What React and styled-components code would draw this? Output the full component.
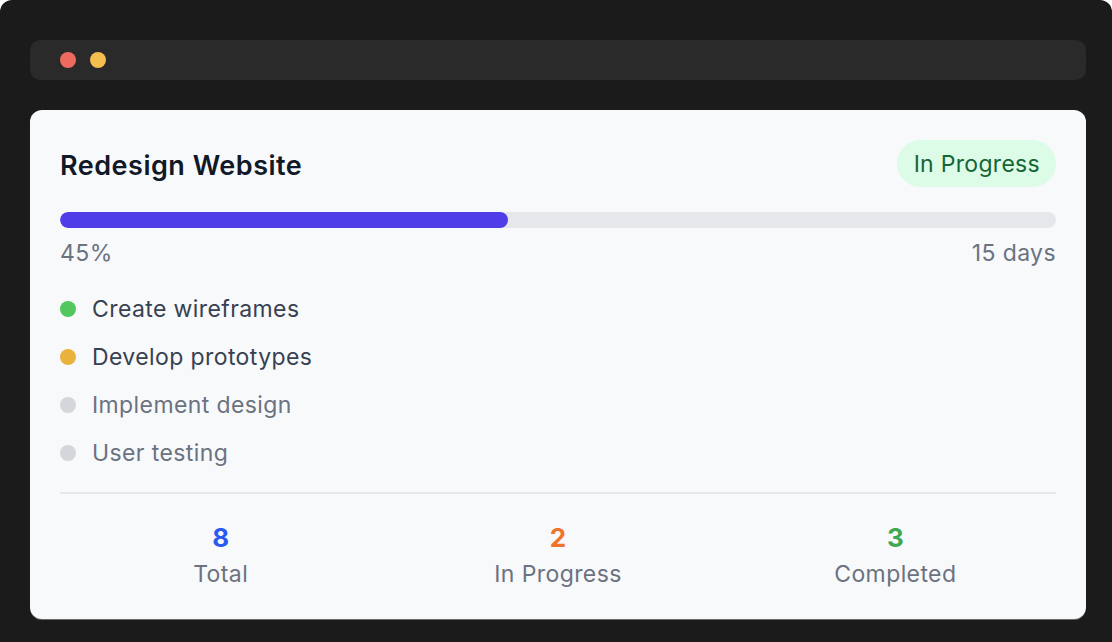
import React from "react";
import styled, { createGlobalStyle } from "styled-components";

const Global = createGlobalStyle`
  html, body { margin: 0; padding: 0; background: #ffffff; }
  body { font-family: Inter, "Noto Sans", "Liberation Sans", sans-serif; -webkit-font-smoothing: antialiased; }
`;

const Frame = styled.div`
  background: #1b1b1b;
  border-radius: 12px 12px 0 0;
  height: 100vh;
  overflow: hidden;
  padding: 40px 26px 0 30px;
  box-sizing: border-box;
`;

const TitleBar = styled.div`
  height: 40px;
  background: #2a2a2a;
  border-radius: 10px;
  display: flex;
  align-items: center;
  gap: 14px;
  padding-left: 30px;
`;

const WinDot = styled.span`
  width: 16px;
  height: 16px;
  border-radius: 50%;
  background: ${(p) => p.$color};
`;

const Card = styled.div`
  margin-top: 30px;
  background: #f8f9fb;
  border-radius: 12px;
  padding: 30px 30px 32px;
  box-shadow: 0 1px 0 rgba(255,255,255,0.35);
`;

const Header = styled.div`
  display: flex;
  align-items: center;
  justify-content: space-between;
`;

const Title = styled.h2`
  margin: 4px 0 0;
  font-size: 27px;
  font-weight: 600;
  color: #111827;
  letter-spacing: 0.5px;
`;

const Badge = styled.span`
  display: inline-flex;
  align-items: center;
  height: 47px;
  padding: 1px 16px 0 17px;
  box-sizing: border-box;
  border-radius: 24px;
  background: #dcfce7;
  color: #166534;
  font-size: 23px;
  letter-spacing: 0.3px;
`;

const Track = styled.div`
  margin-top: 25px;
  height: 16px;
  border-radius: 8px;
  background: #e5e7eb;
  overflow: hidden;
`;

const Fill = styled.div`
  height: 100%;
  border-radius: 8px;
  background: #4f3de8;
`;

const Meta = styled.div`
  margin-top: 12px;
  display: flex;
  justify-content: space-between;
  font-size: 23px;
  letter-spacing: 0.4px;
  line-height: 26px;
  color: #6b7280;
`;

const List = styled.ul`
  list-style: none;
  margin: 30px 0 0;
  padding: 0;
  display: flex;
  flex-direction: column;
  gap: 22px;
`;

const Item = styled.li`
  display: flex;
  align-items: center;
  gap: 16px;
  font-size: 23px;
  letter-spacing: 0.4px;
  line-height: 26px;
  color: ${(p) => (p.$done ? "#374151" : "#6b7280")};
`;

const Bullet = styled.span`
  width: 16px;
  height: 16px;
  border-radius: 50%;
  background: ${(p) => p.$color};
  flex: none;
`;

const Divider = styled.hr`
  margin: 26px 0 0;
  border: 0;
  height: 2px;
  background: #e5e7eb;
`;

const Stats = styled.div`
  margin-top: 28px;
  display: grid;
  grid-template-columns: repeat(3, 1fr);
  gap: 16px;
`;

const Stat = styled.div`
  display: flex;
  flex-direction: column;
  align-items: center;
`;

const StatValue = styled.span`
  font-size: 26px;
  line-height: 32px;
  font-weight: 700;
  color: ${(p) => p.$color};
`;

const StatLabel = styled.span`
  margin-top: 7px;
  font-size: 23px;
  letter-spacing: 0.4px;
  line-height: 26px;
  color: #6b7280;
`;

const tasks = [
  { name: "Create wireframes", color: "#52c75e", done: true },
  { name: "Develop prototypes", color: "#e9b23c", done: true },
  { name: "Implement design", color: "#d4d6dc", done: false },
  { name: "User testing", color: "#d4d6dc", done: false },
];

const stats = [
  { value: 8, label: "Total", color: "#2a5bf0" },
  { value: 2, label: "In Progress", color: "#f0732a" },
  { value: 3, label: "Completed", color: "#3da84e" },
];

export default function App() {
  const progress = 45;
  return (
    <>
      <Global />
      <Frame>
        <TitleBar>
          <WinDot $color="#ee6a5f" />
          <WinDot $color="#f5be4f" />
        </TitleBar>
        <Card>
          <Header>
            <Title>Redesign Website</Title>
            <Badge>In Progress</Badge>
          </Header>
          <Track>
            <Fill style={{ width: `${progress}%` }} />
          </Track>
          <Meta>
            <span>{progress}%</span>
            <span>15 days</span>
          </Meta>
          <List>
            {tasks.map((t) => (
              <Item key={t.name} $done={t.done}>
                <Bullet $color={t.color} />
                {t.name}
              </Item>
            ))}
          </List>
          <Divider />
          <Stats>
            {stats.map((s) => (
              <Stat key={s.label}>
                <StatValue $color={s.color}>{s.value}</StatValue>
                <StatLabel>{s.label}</StatLabel>
              </Stat>
            ))}
          </Stats>
        </Card>
      </Frame>
    </>
  );
}
